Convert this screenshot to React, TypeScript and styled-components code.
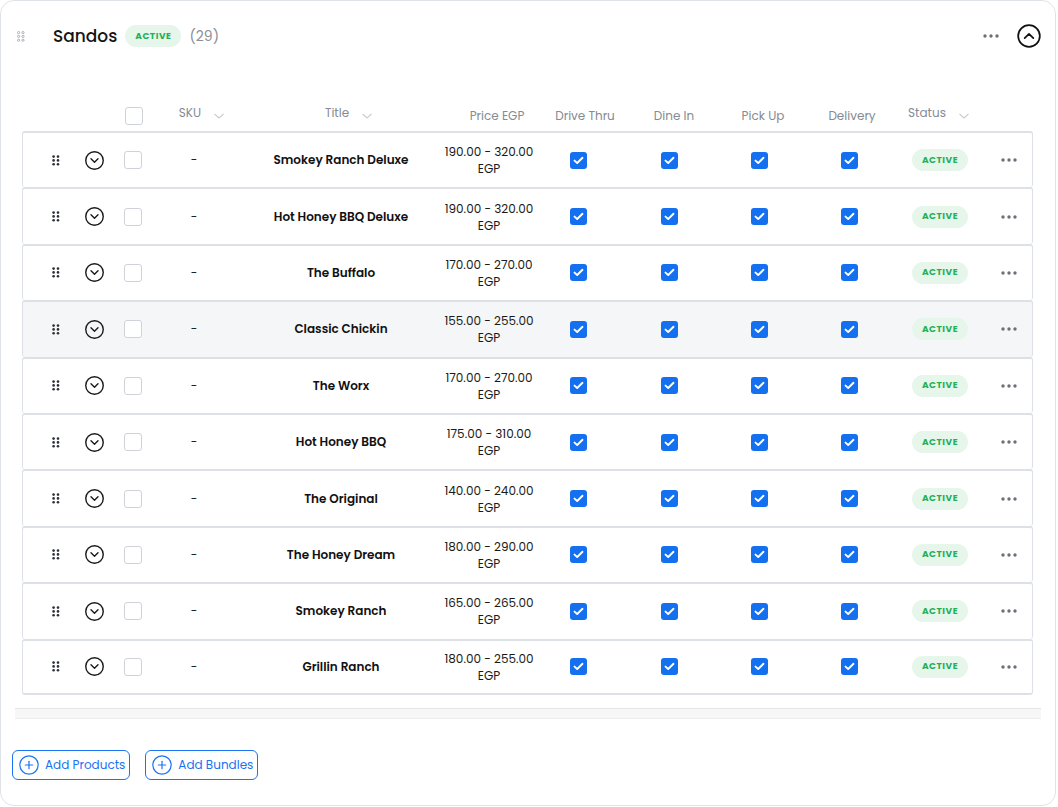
import styled, { createGlobalStyle } from 'styled-components';
import { CircleChevronDown, CircleChevronUp, CirclePlus } from 'lucide-react';

type Product = { title: string; price: string };

const PRODUCTS: Product[] = [
    { title: 'Smokey Ranch Deluxe', price: '190.00 - 320.00' },
    { title: 'Hot Honey BBQ Deluxe', price: '190.00 - 320.00' },
    { title: 'The Buffalo', price: '170.00 - 270.00' },
    { title: 'Classic Chickin', price: '155.00 - 255.00' },
    { title: 'The Worx', price: '170.00 - 270.00' },
    { title: 'Hot Honey BBQ', price: '175.00 - 310.00' },
    { title: 'The Original', price: '140.00 - 240.00' },
    { title: 'The Honey Dream', price: '180.00 - 290.00' },
    { title: 'Smokey Ranch', price: '165.00 - 265.00' },
    { title: 'Grillin Ranch', price: '180.00 - 255.00' },
];

// строка с наведением на скриншоте
const HOVER_ROW = 3;

const ROW_COLS = '40px 36px 42px 80px 214px 82px 96px 86px 94px 86px 96px 42px';
const HEAD_COLS = '40px 36px 41px 96px 198px 98px 78px 100px 78px 100px 74px 1fr';

const FONT = `"Poppins", "Inter", "Noto Sans", sans-serif`;

const GlobalStyle = createGlobalStyle`
  body {
    margin: 0;
    background: #fff;
    font-family: ${FONT};
    -webkit-font-smoothing: antialiased;
  }
`;

const Grip = ({ color, hollow }: { color: string; hollow?: boolean }) => (
    <svg width="8" height="11" viewBox="0 0 8 11">
        {[0, 1, 2].map((r) =>
            [0, 1].map((c) => (
                <circle
                    key={`${r}-${c}`}
                    cx={1.6 + c * 4.4}
                    cy={1.6 + r * 3.8}
                    r={hollow ? 1.1 : 1.3}
                    fill={hollow ? 'none' : color}
                    stroke={color}
                    strokeWidth={hollow ? 0.9 : 0}
                />
            )),
        )}
    </svg>
);

const Dots = ({ color }: { color: string }) => (
    <svg width="18" height="6" viewBox="0 0 18 6">
        {[0, 1, 2].map((i) => (
            <circle key={i} cx={3 + i * 6} cy={3} r={1.7} fill={color} />
        ))}
    </svg>
);

const SortIcon = () => (
    <svg width="12" height="8" viewBox="0 0 12 8">
        <path d="M1.5 2 L6 6 L10.5 2" fill="none" stroke="#c9cdd3" strokeWidth="1.1" />
    </svg>
);

const Checked = () => (
    <BlueBox>
        <svg width="11" height="9" viewBox="0 0 11 9">
            <path d="M1.5 4.6 L4.2 7 L9.5 1.8" fill="none" stroke="#fff" strokeWidth="1.9" strokeLinecap="round" strokeLinejoin="round" />
        </svg>
    </BlueBox>
);

export default function App() {
    return (
        <>
            <GlobalStyle />
            <Card>
                <Header>
                    <HeaderLeft>
                        <Grip color="#a3a9b2" hollow />
                        <CategoryName>Sandos</CategoryName>
                        <Badge>ACTIVE</Badge>
                        <Count>(29)</Count>
                    </HeaderLeft>
                    <HeaderRight>
                        <Dots color="#6b7079" />
                        <CircleChevronUp size={26} strokeWidth={1.6} color="#111" />
                    </HeaderRight>
                </Header>

                <TableWrap>
                    <HeadRow>
                        <span />
                        <span />
                        <Cell><EmptyBox /></Cell>
                        <HeadCell $raised>SKU <SortIcon /></HeadCell>
                        <HeadCell $raised>Title <SortIcon /></HeadCell>
                        <HeadCell>Price EGP</HeadCell>
                        <HeadCell>Drive Thru</HeadCell>
                        <HeadCell>Dine In</HeadCell>
                        <HeadCell>Pick Up</HeadCell>
                        <HeadCell>Delivery</HeadCell>
                        <HeadCell $raised>Status <SortIcon /></HeadCell>
                        <span />
                    </HeadRow>

                    {PRODUCTS.map((p, i) => (
                        <Row key={p.title} $hover={i === HOVER_ROW}>
                            <Cell><Grip color="#2b2f36" /></Cell>
                            <Cell><CircleChevronDown size={21} strokeWidth={1.6} color="#1a1a1a" /></Cell>
                            <Cell><EmptyBox /></Cell>
                            <Cell><Sku>-</Sku></Cell>
                            <Cell><Title>{p.title}</Title></Cell>
                            <Cell>
                                <Price>
                                    {p.price}
                                    <br />
                                    EGP
                                </Price>
                            </Cell>
                            <Cell><Checked /></Cell>
                            <Cell><Checked /></Cell>
                            <Cell><Checked /></Cell>
                            <Cell><Checked /></Cell>
                            <Cell><Badge>ACTIVE</Badge></Cell>
                            <Cell><Dots color="#6b7079" /></Cell>
                        </Row>
                    ))}
                </TableWrap>

                <Divider />

                <Actions>
                    <AddButton>
                        <CirclePlus size={22} strokeWidth={1.3} />
                        Add Products
                    </AddButton>
                    <AddButton>
                        <CirclePlus size={22} strokeWidth={1.3} />
                        Add Bundles
                    </AddButton>
                </Actions>
            </Card>
        </>
    );
}

const Card = styled.div`
  width: 1056px;
  height: 806px;
  box-sizing: border-box;
  border: 1px solid #dfe3e8;
  border-radius: 14px;
  background: #fff;
  overflow: hidden;
`;

const Header = styled.div`
  height: 70px;
  display: flex;
  align-items: center;
  justify-content: space-between;
  padding: 0 13px 0 16px;
  box-sizing: border-box;
`;

const HeaderLeft = styled.div`
  display: flex;
  align-items: center;

  & > svg { margin-right: 28px; }
`;

const HeaderRight = styled.div`
  display: flex;
  align-items: center;
  gap: 16px;
`;

const CategoryName = styled.span`
  font-size: 17px;
  font-weight: 500;
  color: #141414;
  margin-right: 8px;
`;

const Count = styled.span`
  font-size: 14px;
  color: #8a9099;
  margin-left: 8px;
`;

const Badge = styled.span`
  display: inline-flex;
  align-items: center;
  justify-content: center;
  height: 22px;
  padding: 0 10px;
  border-radius: 11px;
  background: #e6f6eb;
  color: #22b057;
  font-size: 9px;
  font-weight: 700;
  letter-spacing: 0.06em;
`;

const TableWrap = styled.div`
  padding: 29px 22px 0 21px;
`;

const HeadRow = styled.div`
  display: grid;
  grid-template-columns: ${HEAD_COLS};
  padding-left: 15px;
  height: 31px;
  align-items: center;
`;

const HeadCell = styled.div<{ $raised?: boolean }>`
  display: flex;
  align-items: center;
  justify-content: center;
  gap: 12px;
  font-size: 12px;
  color: #858b94;
  transform: translateY(${({ $raised }) => ($raised ? '-3px' : '0px')});

  & svg { margin-top: 6px; }
`;

const Row = styled.div<{ $hover?: boolean }>`
  display: grid;
  grid-template-columns: ${ROW_COLS};
  padding-left: 13px;
  height: 56.4px;
  box-sizing: border-box;
  align-items: center;
  border: 1px solid #dde1e6;
  border-width: 2px 1px 0 1px;
  border-radius: 3px;
  background: ${({ $hover }) => ($hover ? '#f5f6f8' : '#fff')};

  &:last-child { border-bottom-width: 2px; }
`;

const Cell = styled.div`
  display: flex;
  align-items: center;
  justify-content: center;
`;

const EmptyBox = styled.span`
  width: 16px;
  height: 16px;
  border: 1px solid #cfd3d9;
  border-radius: 3px;
  background: #fff;
`;

const BlueBox = styled.span`
  width: 17px;
  height: 17px;
  border-radius: 3px;
  background: #1570ef;
  display: flex;
  align-items: center;
  justify-content: center;
`;

const Sku = styled.span`
  font-size: 12px;
  color: #222;
`;

const Title = styled.span`
  font-size: 12px;
  font-weight: 600;
  color: #111;
  white-space: nowrap;
`;

const Price = styled.div`
  font-size: 12px;
  line-height: 17px;
  color: #1a1a1a;
  text-align: center;
  white-space: nowrap;
`;

const Divider = styled.div`
  margin: 13px 14px 0 14px;
  height: 9px;
  background: #f7f7f7;
  border-top: 1px solid #e4e4e4;
  border-bottom: 1px solid #ececec;
`;

const Actions = styled.div`
  display: flex;
  gap: 15px;
  padding: 31px 0 0 11px;
`;

const AddButton = styled.button`
  display: flex;
  align-items: center;
  gap: 5px;
  height: 30px;
  padding: 0 4px 0 5px;
  border: 1px solid #1a73f0;
  border-radius: 6px;
  background: #fff;
  color: #1a73f0;
  font-family: ${FONT};
  font-size: 12px;
  cursor: pointer;
`;
